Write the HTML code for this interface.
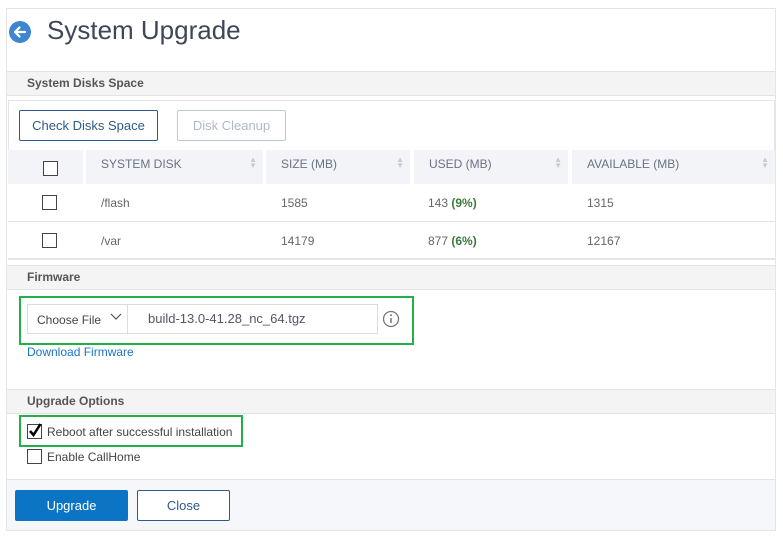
<!DOCTYPE html>
<html><head><style>
*{margin:0;padding:0;box-sizing:border-box}
body{width:783px;height:540px;background:#fff;font-family:"Liberation Sans",sans-serif;position:relative;overflow:hidden;color:#444}
.a{position:absolute}
.panel{left:6px;top:8px;width:770px;height:523px;border:1px solid #e3e5e8;background:#fff}
.sh{left:7px;width:768px;height:25px;background:#f4f4f4;border-top:1px solid #e3e3e3;border-bottom:1px solid #e3e3e3;font-size:12px;font-weight:bold;color:#555;padding:4px 0 0 20px}
.cb{width:15px;height:15px;border:1px solid #444;background:#fff}
.th{top:150px;height:34px;background:#f3f4f8;font-size:12px;color:#6b7280;padding:7px 0 0 15px}
.sort{position:absolute;right:6px;top:7px;color:#c8ccd2;font-size:8px;line-height:6px}
.td{font-size:12px;color:#666}
.g{color:#3d7a3d;font-weight:bold}
.row{left:8px;width:767px;border-bottom:1px solid #e3e5e8}
</style></head><body>
<div class="a panel"></div>
<svg class="a" style="left:9px;top:21px" width="22" height="22" viewBox="0 0 22 22"><circle cx="11" cy="11" r="11" fill="#3f86d0"/><path d="M16 11H6M10.5 6.5L6 11l4.5 4.5" stroke="#fff" stroke-width="2.2" fill="none" stroke-linecap="round" stroke-linejoin="round"/></svg>
<div class="a" style="left:47px;top:15px;font-size:26px;color:#3e4758">System Upgrade</div>

<div class="a sh" style="top:71px">System Disks Space</div>
<div class="a" style="left:8px;top:100px;width:767px;height:50px;border:1px solid #e3e5e8;border-bottom:none"></div>
<div class="a" style="left:19px;top:110px;width:139px;height:31px;border:1px solid #2d5a8a;border-radius:2px;font-size:13px;color:#2d5a8a;text-align:center;line-height:29px">Check Disks Space</div>
<div class="a" style="left:177px;top:110px;width:109px;height:31px;border:1px solid #b9c7d6;border-radius:2px;font-size:13px;color:#b0bac6;text-align:center;line-height:29px">Disk Cleanup</div>

<div class="a th" style="left:8px;width:75px"></div>
<div class="a cb" style="left:43px;top:161px"></div>
<div class="a th" style="left:86px;width:177px">SYSTEM DISK<span class="sort">▲<br>▼</span></div>
<div class="a th" style="left:266px;width:144px">SIZE (MB)<span class="sort">▲<br>▼</span></div>
<div class="a th" style="left:414px;width:154px">USED (MB)<span class="sort">▲<br>▼</span></div>
<div class="a th" style="left:572px;width:203px">AVAILABLE (MB)<span class="sort">▲<br>▼</span></div>

<div class="a row" style="top:184px;height:38px"></div>
<div class="a cb" style="left:42px;top:195px"></div>
<div class="a td" style="left:101px;top:196px">/flash</div>
<div class="a td" style="left:281px;top:196px">1585</div>
<div class="a td" style="left:428px;top:196px">143 <span class="g">(9%)</span></div>
<div class="a td" style="left:587px;top:196px">1315</div>
<div class="a row" style="top:222px;height:38px;border-bottom:2px solid #e3e5e8"></div>
<div class="a cb" style="left:42px;top:233px"></div>
<div class="a td" style="left:101px;top:234px">/var</div>
<div class="a td" style="left:281px;top:234px">14179</div>
<div class="a td" style="left:428px;top:234px">877 <span class="g">(6%)</span></div>
<div class="a td" style="left:587px;top:234px">12167</div>

<div class="a sh" style="top:265px">Firmware</div>
<div class="a" style="left:19px;top:296px;width:395px;height:49px;border:2px solid #22b04a"></div>
<div class="a" style="left:27px;top:304px;width:351px;height:30px;border:1px solid #dcdcdc"></div>
<div class="a" style="left:27px;top:304px;width:101px;height:30px;border-right:1px solid #dcdcdc;font-size:12px;color:#444;padding:9px 0 0 10px">Choose File</div>
<svg class="a" style="left:110px;top:313px" width="12" height="8"><path d="M1 1l5 5 5-5" stroke="#555" fill="none" stroke-width="1.2"/></svg>
<div class="a" style="left:148px;top:311px;font-size:13px;color:#556">build-13.0-41.28_nc_64.tgz</div>
<svg class="a" style="left:382px;top:310px" width="18" height="18"><circle cx="9" cy="9" r="7.5" stroke="#777" stroke-width="1.3" fill="none"/><circle cx="9" cy="5.3" r="1" fill="#777"/><path d="M9 8v5" stroke="#777" stroke-width="1.5"/></svg>
<div class="a" style="left:27px;top:345px;font-size:12px;color:#1a74c4">Download Firmware</div>

<div class="a sh" style="top:389px">Upgrade Options</div>
<div class="a" style="left:19px;top:415px;width:224px;height:32px;border:2px solid #22b04a"></div>
<div class="a cb" style="left:27px;top:424px"></div>
<svg class="a" style="left:27px;top:422px" width="16" height="16"><path d="M3 9l3.5 4L13.5 2" stroke="#000" stroke-width="2.5" fill="none"/></svg>
<div class="a" style="left:47px;top:425px;font-size:12px;color:#444">Reboot after successful installation</div>
<div class="a cb" style="left:27px;top:449px"></div>
<div class="a" style="left:47px;top:450px;font-size:12px;color:#444">Enable CallHome</div>

<div class="a" style="left:7px;top:479px;width:768px;height:51px;background:#f5f7fa;border-top:1px solid #e3e5e8"></div>
<div class="a" style="left:15px;top:490px;width:113px;height:31px;background:#0c74c4;border-radius:2px;color:#fff;font-size:13px;text-align:center;line-height:31px">Upgrade</div>
<div class="a" style="left:137px;top:490px;width:93px;height:31px;border:1px solid #2d5a8a;background:#fff;border-radius:2px;color:#2d5a8a;font-size:13px;text-align:center;line-height:29px">Close</div>
</body></html>
